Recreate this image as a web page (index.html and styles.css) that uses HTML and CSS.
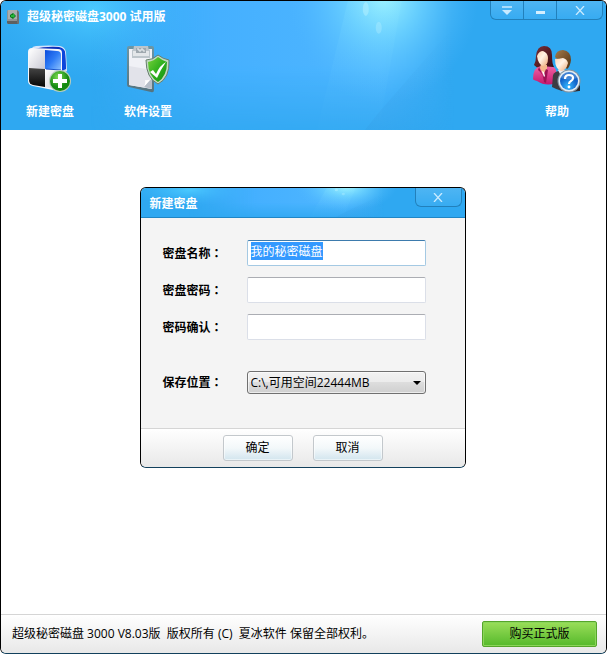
FILE: index.html
```html
<!DOCTYPE html>
<html lang="zh-CN">
<head>
    <meta charset="UTF-8">
    <meta name="viewport" content="width=device-width, initial-scale=1.0">
    <title>超级秘密磁盘3000 试用版</title>
    <link rel="stylesheet" href="styles.css">
</head>
<body>
    <div class="window">
        <header class="window-header">
            <svg class="sky" viewBox="0 0 607 130" preserveAspectRatio="none" aria-hidden="true">
                <defs>
                    <linearGradient id="skyBand">
                        <stop offset="0" stop-color="#45b0ff" stop-opacity="0"/>
                        <stop offset=".35" stop-color="#45b0ff"/>
                        <stop offset=".8" stop-color="#4fb6ff"/>
                        <stop offset="1" stop-color="#4fb6ff" stop-opacity="0"/>
                    </linearGradient>
                    <radialGradient id="skyGlow">
                        <stop offset="0" stop-color="#9df4ff"/>
                        <stop offset=".4" stop-color="#70d6ff" stop-opacity=".75"/>
                        <stop offset="1" stop-color="#4fb8ff" stop-opacity="0"/>
                    </radialGradient>
                    <radialGradient id="skyCyan">
                        <stop offset="0" stop-color="#4bcaff"/>
                        <stop offset="1" stop-color="#3ab4f8" stop-opacity="0"/>
                    </radialGradient>
                    <linearGradient id="skyFade" x2="0" y2="1">
                        <stop offset="0" stop-color="#fff"/>
                        <stop offset=".5" stop-color="#fff"/>
                        <stop offset="1" stop-color="#333"/>
                    </linearGradient>
                    <linearGradient id="skyRay" x2="0" y2="1">
                        <stop offset="0" stop-color="#a0f2ff" stop-opacity=".12"/>
                        <stop offset="1" stop-color="#5cc4ff" stop-opacity=".02"/>
                    </linearGradient>
                    <linearGradient id="skyDark">
                        <stop offset="0" stop-color="#2f86cc" stop-opacity=".12"/>
                        <stop offset="1" stop-color="#2f86cc" stop-opacity="0"/>
                    </linearGradient>
                    <mask id="skyMask">
                        <rect width="607" height="130" fill="url(#skyFade)"/>
                    </mask>
                </defs>
                <g id="skyArt">
                    <rect width="607" height="130" fill="#2fa8f1"/>
                    <ellipse cx="95" cy="8" rx="120" ry="70" fill="url(#skyCyan)"/>
                    <rect x="90" width="365" height="130" fill="url(#skyBand)" mask="url(#skyMask)"/>
                    <ellipse cx="384" cy="-6" rx="95" ry="110" fill="url(#skyGlow)"/>
                    <path d="M348 0h54l-23 130h-62z" fill="url(#skyRay)"/>
                    <path d="M455 25v105h-90l16-20z" fill="url(#skyDark)"/>
                    <ellipse cx="366" cy="8" rx="3" ry="7" fill="#c6f8ff" opacity=".4"/>
                    <ellipse cx="379" cy="27" rx="3" ry="6" fill="#b9f1ff" opacity=".35"/>
                </g>
            </svg>
            <div class="title-bar">
                <svg class="app-icon" viewBox="0 0 14 16" aria-hidden="true">
                    <path d="M2 1h9l2 2v11l-1 1H2l-1-1V2z" fill="#8f9394"/>
                    <path d="M2 1h9l1 2v7H2z" fill="#a9adad"/>
                    <path d="M1 12h12v2l-1 1H2l-1-1z" fill="#5d6061"/>
                    <path d="M11 1l2 2v11l-2 1z" fill="#6d7071"/>
                    <path d="M4 6l3-2 3 3-3 3-3-2z" fill="#08781b"/>
                    <path d="M5 6h2V4l2 3-2 2V8H5z" fill="#27b63a"/>
                </svg>
                <h1 class="title">超级秘密磁盘3000 试用版</h1>
            </div>
            <div class="window-controls">
                <button type="button" class="control" aria-label="菜单">
                    <svg width="10" height="9" viewBox="0 0 10 9"><path d="M0 1h10" stroke="#c8eaff" stroke-width="1.500"/><path d="M0 4h10L5 9z" fill="#c8eaff"/></svg>
                </button>
                <button type="button" class="control" aria-label="最小化">
                    <svg width="10" height="9" viewBox="0 0 10 9"><path d="M1 6.500h9" stroke="#d4efff" stroke-width="3"/></svg>
                </button>
                <button type="button" class="control control-close" aria-label="关闭">
                    <svg width="10" height="9" viewBox="0 0 10 9"><path d="M1 0l8 9M9 0L1 9" stroke="#c8eaff" stroke-width="1.300"/></svg>
                </button>
            </div>
            <nav class="toolbar">
                <button type="button" class="tool">
                    <svg width="50" height="50" viewBox="1 0 50 50" aria-hidden="true">
                        <defs>
                            <linearGradient id="silver" x2="1" y2="1"><stop offset="0" stop-color="#fff"/><stop offset="1" stop-color="#c9c9d4"/></linearGradient>
                            <linearGradient id="blueTile" x2="1" y2="1"><stop offset="0" stop-color="#0a4bdc"/><stop offset=".5" stop-color="#2f7cf5"/><stop offset="1" stop-color="#8fc4ff"/></linearGradient>
                            <linearGradient id="blackTile" x2="0" y2="1"><stop offset="0" stop-color="#444"/><stop offset="1" stop-color="#050505"/></linearGradient>
                            <radialGradient id="greenBall" cx=".4" cy=".3"><stop offset="0" stop-color="#7fdc52"/><stop offset="1" stop-color="#168a12"/></radialGradient>
                        </defs>
                        <path d="M7 4q2-3 5-3 14-1 24 0 5 1 6 6l1 19-6 4z" fill="#d5e4fb"/>
                        <path d="M9 4q14-3 26-2 5 1 6 5l1 18-5 3z" fill="#0b2fb8"/>
                        <path d="M36 3q4 1 5 5l1 17-4 3z" fill="#0b45dc"/>
                        <path d="M38 26l4-2v15q-1 6-7 6z" fill="#cbd6ea"/>
                        <path d="M4 7q0-4 4-4l26 1q4 0 4 4v34q0 4-4 4L9 41q-5-1-5-5z" fill="#f5f6fb"/>
                        <path d="M5 8q0-4 4-4l12 1v19L5 23z" fill="url(#silver)"/>
                        <path d="M21 5l12 1q4 0 4 4v15l-16-1z" fill="url(#blueTile)"/>
                        <path d="M5 23l16 1v18L9 40q-4-1-4-5z" fill="url(#blackTile)"/>
                        <path d="M21 24l16 1v16l-4 3-12-2z" fill="url(#silver)"/>
                        <path d="M22 24l15 1" stroke="#1754cf"/>
                        <circle cx="36" cy="36" r="11" fill="#b9cdbb"/>
                        <circle cx="36" cy="36" r="10" fill="url(#greenBall)"/>
                        <path d="M34 29h4v5h5v4h-5v5h-4v-5h-5v-4h5z" fill="#fff"/>
                    </svg>
                    <span>新建密盘</span>
                </button>
                <button type="button" class="tool">
                    <svg width="50" height="50" viewBox="1 0 50 50" aria-hidden="true">
                        <defs>
                            <linearGradient id="board" x2="0" y2="1"><stop offset="0" stop-color="#6d96a5"/><stop offset="1" stop-color="#54737f"/></linearGradient>
                            <linearGradient id="shield" x2="1" y2="1"><stop offset="0" stop-color="#77d23b"/><stop offset=".5" stop-color="#30b01e"/><stop offset="1" stop-color="#129112"/></linearGradient>
                        </defs>
                        <path d="M5 3q0-2 2-2h23q2 0 2 2v42q0 3-3 2L7 42q-2 0-2-3z" fill="url(#board)"/>
                        <path d="M7 4h23v40L7 40z" fill="#f0f1f6"/>
                        <path d="M7 21l23 4v19L7 40z" fill="#e2e3ea"/>
                        <path d="M22 42q2-5 1-7 4 1 7-2z" fill="#fff"/>
                        <path d="M22 42l8-9v11z" fill="#b5bdc8"/>
                        <path d="M10 5q2-1 2-4h14q0 3 2 4v8H10z" fill="#bdc5cb"/>
                        <path d="M11 6h16v5H11z" fill="#e3e6e9"/>
                        <path d="M14 3h10v5H14z" fill="#9fa8af"/>
                        <path d="M15 4h2v2h2V4h2v2h2" stroke="#eef2f4" fill="none"/>
                        <path d="M36 10q5 4 11 5 1 18-11 24-12-6-12-24 7 0 12-5z" fill="#c1d8c0" stroke="#657f6c"/>
                        <path d="M36 12q5 4 9 5 0 14-9 20-10-6-10-20 6-1 10-5z" fill="url(#shield)"/>
                        <path d="M28 27l3-2 3 4q4-9 10-12-5 7-9 16z" fill="#fff"/>
                    </svg>
                    <span>软件设置</span>
                </button>
                <button type="button" class="tool tool-help">
                    <svg width="50" height="50" viewBox="0 0 50 50" aria-hidden="true">
                        <defs>
                            <linearGradient id="skin" x2="1" y2="1"><stop offset="0" stop-color="#ffd6b4"/><stop offset=".45" stop-color="#fff3e6"/><stop offset="1" stop-color="#eda775"/></linearGradient>
                            <linearGradient id="hairRed" x2="1" y2="1"><stop offset="0" stop-color="#7c3239"/><stop offset="1" stop-color="#35070f"/></linearGradient>
                            <linearGradient id="hairBrown" x2="1" y2="1"><stop offset="0" stop-color="#a47b4b"/><stop offset="1" stop-color="#513011"/></linearGradient>
                            <linearGradient id="pink" x2="0" y2="1"><stop offset="0" stop-color="#f264a5"/><stop offset="1" stop-color="#c4166c"/></linearGradient>
                            <radialGradient id="blueBall" cx=".45" cy=".8"><stop offset="0" stop-color="#35b8ff"/><stop offset="1" stop-color="#1263c9"/></radialGradient>
                        </defs>
                        <path d="M4 11Q5 1 12 1q8 0 8 9 0 9 2 12-5 4-9 3-6 0-11-5 2-4 2-9z" fill="url(#hairRed)"/>
                        <path d="M1 34q0-12 8-13l12 1q5 1 3 16-10 4-19-2-4-1-4-2z" fill="url(#pink)"/>
                        <path d="M9 19l6 1v6l-4 3-3-6z" fill="#f5b88c"/>
                        <path d="M7 22l4 9 3-7 2 1-2 13-2-1q-1-9-6-12z" fill="#9b1353"/>
                        <path d="M10 26l2 1 1 4-1 1z" fill="#fff"/>
                        <path d="M5 11q2-5 6-5 5 2 5 7 0 8-5 8-5-2-6-10z" fill="url(#skin)"/>
                        <path d="M20 42l1-12q2-4 7-4h6q11 2 13 20-14 3-27-4z" fill="#3c3c42"/>
                        <path d="M26 25h8l-4 8z" fill="#e9eef4"/>
                        <path d="M23 12q1-7 8-7 8 1 8 10-1 7-4 9L25 14z" fill="url(#hairBrown)"/>
                        <path d="M23 14q4 0 8-1 4 1 5 5-2 8-7 8-6-2-6-12z" fill="url(#skin)"/>
                        <path d="M46 37l2 4v5l-7-1z" fill="#25252a"/>
                        <circle cx="37" cy="36" r="11.500" fill="#8294a3"/>
                        <circle cx="37" cy="36" r="10.500" fill="#e1ebf3"/>
                        <circle cx="37" cy="36" r="9" fill="url(#blueBall)"/>
                        <path d="M29 33q1-6 8-6t8 6q-8 3-16 0z" fill="#fff" opacity=".2"/>
                        <path d="M33 34q0-4 4-4t4 3q0 2-2 3t-2 3" fill="none" stroke="#fff" stroke-width="2.200"/>
                        <circle cx="37" cy="42" r="1.400" fill="#fff"/>
                    </svg>
                    <span>帮助</span>
                </button>
            </nav>
        </header>

        <main class="content">
            <form class="dialog" role="dialog" aria-labelledby="dialogTitle">
                <div class="dialog-header">
                    <svg class="sky" viewBox="0 0 607 130" preserveAspectRatio="none" aria-hidden="true"><use href="#skyArt"/></svg>
                    <h2 class="title" id="dialogTitle">新建密盘</h2>
                    <div class="window-controls">
                        <button type="button" class="control control-close" aria-label="关闭">
                            <svg width="10" height="9" viewBox="0 0 10 9"><path d="M1 0l8 9M9 0L1 9" stroke="#c8eaff" stroke-width="1.300"/></svg>
                        </button>
                    </div>
                </div>
                <div class="dialog-body">
                    <div class="field">
                        <label for="diskName">密盘名称<span class="colon" lang="zh-TW">：</span></label>
                        <input type="text" id="diskName" value="我的秘密磁盘">
                    </div>
                    <div class="field">
                        <label for="password">密盘密码<span class="colon" lang="zh-TW">：</span></label>
                        <input type="password" id="password">
                    </div>
                    <div class="field">
                        <label for="confirm">密码确认<span class="colon" lang="zh-TW">：</span></label>
                        <input type="password" id="confirm">
                    </div>
                    <div class="field field-location">
                        <label for="location">保存位置<span class="colon" lang="zh-TW">：</span></label>
                        <div class="select-wrap">
                            <select id="location">
                                <option>C:\,可用空间22444MB</option>
                            </select>
                        </div>
                    </div>
                </div>
                <div class="dialog-footer">
                    <button type="submit" class="btn">确定</button>
                    <button type="button" class="btn">取消</button>
                </div>
            </form>
        </main>

        <footer class="status-bar">
            <p class="copyright">超级秘密磁盘 3000 V8.03版&nbsp; 版权所有 (C)&nbsp; 夏冰软件 保留全部权利。</p>
            <button type="button" class="btn-buy">购买正式版</button>
        </footer>
    </div>
    <script>
        const diskName = document.getElementById('diskName');
        diskName.focus();
        diskName.select();
    </script>
</body>
</html>
```

FILE: styles.css
```css
* {
    box-sizing: border-box;
}
body {
    margin: 0;
    background-color: #fff;
    font-family: "Open Sans", "Noto Sans CJK SC", sans-serif;
    font-size: 12px;
    line-height: 16px;
    color: #000;
}
button, input, select {
    font: inherit;
    color: inherit;
}
.window {
    display: flex;
    flex-direction: column;
    min-height: 100vh;
    border: 1px solid #000;
    border-bottom-color: #12405c;
    border-radius: 6px;
    overflow: hidden;
    background-color: #fff;
}

/* header */
.window-header {
    position: relative;
    box-shadow: inset 0 1px #6fb4de;
}
.window-header, .dialog-header {
    isolation: isolate;
}
.sky {
    position: absolute;
    top: 0;
    left: 0;
    z-index: -1;
    width: 100%;
    height: 100%;
}
.title-bar {
    display: flex;
    align-items: center;
    gap: 7px;
    height: 30px;
    padding: 1px 0 0 5px;
}
.app-icon {
    width: 14px;
    height: 16px;
}
.title {
    margin: 0;
    font-size: 12px;
    font-weight: bold;
    color: #fff;
}
.window-controls {
    position: absolute;
    top: 0;
    right: 3px;
    display: flex;
    height: 19px;
    border: 1px solid #2280bb;
    border-top: 0;
    border-radius: 0 0 6px 6px;
    overflow: hidden;
}
.control {
    display: flex;
    justify-content: center;
    align-items: center;
    width: 33px;
    padding: 0;
    border: 0;
    border-right: 1px solid #2280bb;
    background: linear-gradient(rgba(255, 255, 255, .15), rgba(255, 255, 255, .04));
}
.control-close {
    width: 45px;
    border-right: 0;
}
.toolbar {
    display: flex;
    height: 99px;
    padding-top: 14px;
}
.tool {
    display: flex;
    flex-direction: column;
    align-items: center;
    gap: 9px;
    width: 98px;
    padding: 0;
    border: 0;
    background: none;
    font-weight: bold;
    color: #fff;
}
.tool svg {
    flex: none;
}
.tool-help {
    margin-left: auto;
}

/* dialog */
.content {
    flex: 1;
    padding: 57px 18px 16px 16px;
}
.dialog {
    width: 326px;
    max-width: 100%;
    margin: 0 auto;
    border: 1px solid #000;
    border-bottom-color: #12405c;
    border-radius: 6px;
    overflow: hidden;
    background-color: #f4f4f4;
}
.dialog-header {
    position: relative;
    display: flex;
    align-items: center;
    height: 30px;
    padding: 2px 0 0 9px;
    border-bottom: 1px solid #1f86c6;
}
.dialog-body {
    padding: 22px 39px 23px 22px;
}
.field {
    display: flex;
    align-items: center;
    margin-bottom: 11px;
}
.field label {
    flex: none;
    width: 84px;
    font-weight: bold;
}
.colon {
    font-family: "Noto Sans CJK TC", sans-serif;
}
.field input {
    flex: 1;
    min-width: 0;
    height: 26px;
    padding: 0 3px 4px;
    border: 1px solid #dbdfe8;
    border-top-color: #abadb3;
    border-radius: 2px;
    outline: none;
    background-color: #fff;
}
.field input:focus {
    border-color: #a4c9e3;
    border-top-color: #3d7bad;
}
.field input::selection {
    background-color: #3399ff;
    color: #fff;
}
.field-location {
    margin-top: 31px;
}
.select-wrap {
    position: relative;
    flex: 1;
}
.select-wrap::after {
    content: "";
    position: absolute;
    top: 10px;
    right: 5px;
    border: 4px solid transparent;
    border-top-color: #000;
    border-bottom: 0;
    pointer-events: none;
}
.field select {
    display: block;
    width: 100%;
    height: 23px;
    padding: 0 16px 0 3px;
    border: 1px solid #707070;
    border-radius: 3px;
    appearance: none;
    background: linear-gradient(#f2f2f2, #ebebeb 50%, #dddddd 50%, #cfcfcf);
    box-shadow: inset 0 0 0 1px rgba(255, 255, 255, .6);
}
.dialog-footer {
    display: flex;
    justify-content: center;
    gap: 20px;
    padding: 6px 0;
    border-top: 1px solid #d5d5d5;
    background: linear-gradient(#fff, #e8e8e8);
}
.btn {
    width: 70px;
    height: 26px;
    padding: 0;
    border: 1px solid #c3c8cc;
    border-radius: 3px;
    background: linear-gradient(#fff, #f3f8fa 50%, #d2e5ee);
    box-shadow: inset 0 0 0 1px rgba(255, 255, 255, .5);
}

/* status bar */
.status-bar {
    display: flex;
    align-items: center;
    justify-content: space-between;
    height: 39px;
    padding: 0 9px 0 11px;
    border-top: 1px solid #d5d5d5;
    background: linear-gradient(#fff, #e8e8e8);
}
.copyright {
    margin: 0;
}
.btn-buy {
    width: 115px;
    height: 26px;
    padding: 0;
    border: 1px solid #55a52a;
    border-radius: 2px;
    background: linear-gradient(#9ade59, #55b92b);
    box-shadow: inset 0 0 0 1px #8bd65a;
}
```
